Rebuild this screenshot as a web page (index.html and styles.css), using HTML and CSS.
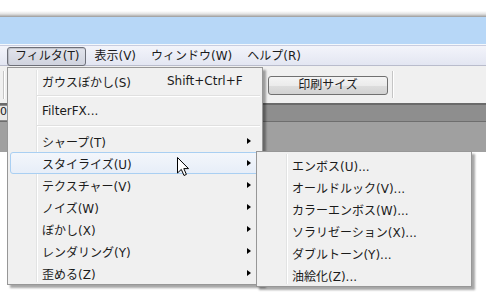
FILE: index.html
```html
<!DOCTYPE html>
<html lang="ja">
<head>
    <meta charset="UTF-8">
    <title>フィルタ メニュー</title>
    <link rel="stylesheet" href="styles.css">
</head>
<body>
    <div class="window">
        <div class="frame-top"></div>
        <div class="caption"></div>

        <!-- Menu bar -->
        <div class="menubar">
            <span class="menubar-item open">フィルタ(T)</span>
            <span class="menubar-item">表示(V)</span>
            <span class="menubar-item">ウィンドウ(W)</span>
            <span class="menubar-item">ヘルプ(R)</span>
        </div>

        <!-- Toolbar -->
        <div class="toolbar">
            <span class="tb-sep"></span>
            <button class="tb-button">印刷サイズ</button>
            <span class="tb-sep"></span>
        </div>

        <div class="tabstrip"><span class="tab">0</span></div>
        <div class="workspace"></div>
    </div>

    <!-- Filter menu -->
    <div class="menu menu-main">
        <div class="menu-item"><span class="label">ガウスぼかし(S)</span><span class="shortcut">Shift+Ctrl+F</span></div>
        <div class="menu-sep"></div>
        <div class="menu-item"><span class="label">FilterFX...</span></div>
        <div class="menu-sep"></div>
        <div class="menu-item sub"><span class="label">シャープ(T)</span></div>
        <div class="menu-item sub active"><span class="label">スタイライズ(U)</span></div>
        <div class="menu-item sub"><span class="label">テクスチャー(V)</span></div>
        <div class="menu-item sub"><span class="label">ノイズ(W)</span></div>
        <div class="menu-item sub"><span class="label">ぼかし(X)</span></div>
        <div class="menu-item sub"><span class="label">レンダリング(Y)</span></div>
        <div class="menu-item sub"><span class="label">歪める(Z)</span></div>
    </div>

    <!-- Stylize submenu -->
    <div class="menu menu-sub">
        <div class="menu-item"><span class="label">エンボス(U)...</span></div>
        <div class="menu-item"><span class="label">オールドルック(V)...</span></div>
        <div class="menu-item"><span class="label">カラーエンボス(W)...</span></div>
        <div class="menu-item"><span class="label">ソラリゼーション(X)...</span></div>
        <div class="menu-item"><span class="label">ダブルトーン(Y)...</span></div>
        <div class="menu-item"><span class="label">油絵化(Z)...</span></div>
    </div>

    <svg class="cursor" width="13" height="20" viewBox="0 0 13 20">
        <polygon points="0.5,0.5 0.5,16 4.3,12.4 7,18.5 9.4,17.4 6.8,11.6 11.5,11.6" fill="#ffffff" stroke="#000000" stroke-width="1" stroke-linejoin="miter"/>
    </svg>
</body>
</html>
```

FILE: styles.css
```css
/* Base */
* {
    margin: 0;
    padding: 0;
    box-sizing: border-box;
}

body {
    width: 486px;
    height: 298px;
    overflow: hidden;
    position: relative;
    background-color: #ffffff;
    font-family: 'DejaVu Sans', 'Noto Sans CJK JP', sans-serif;
    font-size: 12px;
    color: #1b1b1b;
}

/* Window chrome */
.frame-top {
    height: 17px;
    background: linear-gradient(to bottom, #ffffff 0, #ffffff 11px, #e2e2e2 14px, #9a9a9a 17px);
}

.caption {
    height: 28px;
    background-color: #b7d7f7;
    border-bottom: 1px solid #f4f8fc;
}

/* Menu bar */
.menubar {
    height: 21px;
    display: flex;
    align-items: flex-end;
    padding-left: 7px;
    background: linear-gradient(to bottom, #f3f4fa, #e3e6f2);
    border-top: 1px solid #c9cde0;
    border-bottom: 1px solid #b9bccc;
}

.menubar-item {
    height: 19px;
    line-height: 17px;
    padding: 0 6px 0 7px;
    border: 1px solid transparent;
    border-radius: 3px;
    margin-bottom: -1px;
}

.menubar-item.open {
    border-color: #6d6f78;
    background: linear-gradient(to bottom, #e2e4ec, #d0d3de);
    box-shadow: inset 1px 1px 1px rgba(0, 0, 0, 0.15);
}

/* Toolbar */
.toolbar {
    height: 37px;
    display: flex;
    align-items: center;
    padding-left: 3px;
    background-color: #f0f0f0;
}

.tb-sep {
    width: 2px;
    height: 28px;
    border-left: 1px solid #c5c5c5;
    border-right: 1px solid #ffffff;
}

.tb-button {
    width: 120px;
    height: 19px;
    margin: 2px 4px 0 263px;
    font-family: inherit;
    font-size: 12px;
    line-height: 15px;
    color: #1b1b1b;
    border: 1px solid #707070;
    border-radius: 3px;
    background: linear-gradient(to bottom, #f4f4f4 0, #ebebeb 50%, #dddddd 51%, #d2d2d2 100%);
}

.tb-button + .tb-sep {
    height: 27px;
}

/* Ruler / tab strip */
.tabstrip {
    height: 19px;
    background-color: #8e8e8e;
    border-top: 2px solid #6a6a6a;
    border-bottom: 1px solid #6e6e6e;
}

.tab {
    display: block;
    width: 7px;
    height: 14px;
    overflow: hidden;
    background-color: #e8e8e8;
    font-size: 11px;
    line-height: 12px;
    margin-top: 1px;
}

.workspace {
    height: 30px;
    background-color: #a0a0a0;
}

/* Menus */
.menu {
    position: absolute;
    background-color: #f0f0f0;
    border: 1px solid #979797;
    padding: 2px;
    box-shadow: 3px 3px 2px rgba(0, 0, 0, 0.35);
}

.menu::before {
    content: "";
    position: absolute;
    top: 2px;
    bottom: 2px;
    width: 1px;
    background-color: #e2e3e3;
    border-right: 1px solid #ffffff;
}

.menu-main {
    left: 7px;
    top: 67px;
    width: 256px;
    height: 218px;
}

.menu-main::before {
    left: 28px;
}

.menu-sub {
    left: 256px;
    top: 151px;
    width: 216px;
    height: 136px;
}

.menu-sub::before {
    left: 29px;
}

.menu-item {
    position: relative;
    height: 22px;
    display: flex;
    align-items: center;
    padding-left: 31px;
    border: 1px solid transparent;
    border-radius: 3px;
}

.menu-sub .menu-item {
    padding-left: 32px;
}

.menu-item .shortcut {
    position: absolute;
    left: 156px;
}

.menu-item.sub::after {
    content: "";
    position: absolute;
    left: 236px;
    top: 7px;
    border-left: 4px solid #000000;
    border-top: 3.5px solid transparent;
    border-bottom: 3.5px solid transparent;
}

.menu-item.active {
    border-color: #a9cff2;
    background: linear-gradient(to bottom, #f3f6fb, #e7eef8);
}

.menu-sep {
    height: 8px;
    margin-left: 27px;
    position: relative;
}

.menu-sep::after {
    content: "";
    position: absolute;
    left: 0;
    right: 0;
    top: 3px;
    height: 1px;
    background-color: #e0e0e0;
    border-bottom: 1px solid #ffffff;
    box-sizing: content-box;
}

.cursor {
    position: absolute;
    left: 177px;
    top: 157px;
}
```
